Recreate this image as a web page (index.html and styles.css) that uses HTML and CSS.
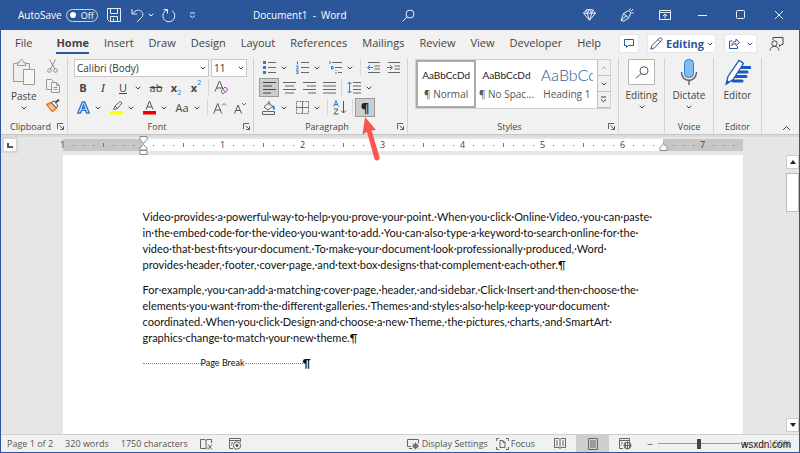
FILE: index.html
```html
<!DOCTYPE html>
<html lang="en">
<head>
    <meta charset="UTF-8">
    <meta name="viewport" content="width=device-width, initial-scale=1.0">
    <title>Document1 - Word</title>
    <link rel="stylesheet" href="styles.css">
</head>
<body>
    <svg class="sprite" aria-hidden="true">
        <symbol id="chev" viewBox="0 0 6 4"><path d="M.7.7 3 3 5.3.7" fill="none" stroke="currentColor"/></symbol>
        <symbol id="launch" viewBox="0 0 8 8"><path d="M.5 7V.5H7M3 3l4 4M7.5 3.5v4h-4" fill="none" stroke="currentColor"/></symbol>
    </svg>

    <div class="window">
        <!-- Title bar -->
        <header class="titlebar">
            <div class="quick-access">
                <span>AutoSave</span>
                <button class="toggle" aria-label="AutoSave off"><i></i>Off</button>
                <button class="save" aria-label="Save"><svg width="14" height="14" viewBox="0 0 14 14"><path d="M.5.5h13v13h-11l-2-2zM3.500.5v5h7v-5M3.500 13.500v-5h7v5M6.500 10.500v3"/></svg></button>
                <button class="undo" aria-label="Undo"><svg width="13" height="15" viewBox="0 0 13 15"><path d="M1 1v5h5M1.300 5.700C5 1.500 8.500 1.500 10.500 3.500c2 2 1.600 4.500 0 6L6 14"/></svg></button>
                <button class="more" aria-label="Undo list"><svg width="6" height="4"><use href="#chev"/></svg></button>
                <button class="redo" aria-label="Redo"><svg width="14" height="15" viewBox="0 0 14 15"><path d="M1.500 1.500h4v4M5.300 2A6 6 0 1 0 10 2.700"/></svg></button>
                <button class="custom" aria-label="Customize"><svg width="7" height="7" viewBox="0 0 7 7"><path d="M1 1h5M1 3.500l2.500 2.200L6 3.500"/></svg></button>
            </div>
            <div class="doc-title">Document1&nbsp; -&nbsp; Word</div>
            <button class="search" aria-label="Search"><svg width="13" height="13" viewBox="0 0 13 13"><circle cx="8" cy="5" r="4"/><path d="M5 8 .700 12.300"/></svg></button>
            <div class="window-buttons">
                <button aria-label="Premium"><svg width="13" height="12" viewBox="0 0 13 12"><path d="M3.500.7h6l3 3.500-6 7-6-7zM.5 4.200h12M3.500.700l.7 3.500 2.300 7 2.300-7 .700-3.500M4.200 4.200 6.500.7l2.300 3.500"/></svg></button>
                <button aria-label="Coming soon"><svg width="14" height="14" viewBox="0 0 14 14"><path d="M1 12.500 3.500 5.500 8.500 2.500l2.500 2.500-2.500 5-4.500 3zM1 12.500 6.500 7.500M3.500 5.500l5 4.500M10 2.500V.500M11 3.500l2-2.500M11.500 5h2"/></svg></button>
                <button aria-label="Ribbon display options"><svg width="12" height="10" viewBox="0 0 12 10"><path d="M.5.5h11v9H.500zM.500 2.500h11M6 8.500v-4M4 6l2-2 2 2"/></svg></button>
                <button aria-label="Minimize"><svg width="10" height="10" viewBox="0 0 10 10"><path d="M0 5.500h9"/></svg></button>
                <button aria-label="Maximize"><svg width="10" height="10" viewBox="0 0 10 10"><rect x=".5" y=".5" width="8" height="8" rx="1"/></svg></button>
                <button aria-label="Close"><svg width="10" height="10" viewBox="0 0 10 10"><path d="M1 1l8 8M9 1 1 9"/></svg></button>
            </div>
        </header>

        <!-- Tabs -->
        <nav class="tabs">
            <a href="#" class="file">File</a>
            <a href="#" class="active">Home</a>
            <a href="#">Insert</a>
            <a href="#">Draw</a>
            <a href="#">Design</a>
            <a href="#">Layout</a>
            <a href="#">References</a>
            <a href="#">Mailings</a>
            <a href="#">Review</a>
            <a href="#">View</a>
            <a href="#">Developer</a>
            <a href="#">Help</a>
            <div class="tab-actions">
                <button class="card" aria-label="Comments"><svg width="10" height="9" viewBox="0 0 10 9"><path d="M.5.500h9v6H4.500l-2 2v-2h-2z"/></svg></button>
                <button class="card editing"><svg width="13" height="13" viewBox="0 0 13 13"><path d="M.7 12.300 2 8.500l7.300-7.300a1.500 1.500 0 0 1 2.300 2.300L4.300 11zM8 2.500 10.500 5"/></svg><b>Editing</b><svg width="6" height="4"><use href="#chev"/></svg></button>
                <button class="card share" aria-label="Share"><svg width="11" height="11" viewBox="0 0 11 11"><path d="M3.500 3H.5v7.500h8V8M3 7.500c0-3 1.500-4 4-4V1l3.500 3.500L7 7.500V5.700c-2 0-3 .3-4 1.800z"/></svg><svg width="6" height="4"><use href="#chev"/></svg></button>
                <button class="person" aria-label="Account"><svg width="15" height="14" viewBox="0 0 15 14"><path d="M4 3V.5h10v7h-1.500l-2 2v-2M1 13.500C1.500 10 4 9.500 5.500 9.500s4 .5 4.500 4"/><circle cx="5.500" cy="6.500" r="2.700"/></svg></button>
            </div>
        </nav>

        <!-- Ribbon -->
        <section class="ribbon">
            <div class="group clipboard">
                <div class="group-body">
                    <button class="big">
                        <svg width="24" height="27" viewBox="0 0 24 27" fill="#eee" stroke="#999"><path d="M1.500 4.500h16v18h-16z"/><path d="M5.500 6.500v-3h2c.5-4 3.500-4 4 0h2v3z"/><path d="M11.500 10.500h11v15h-11z" fill="#f6f6f6"/></svg>
                        <span>Paste</span>
                        <svg width="6" height="4"><use href="#chev"/></svg>
                    </button>
                    <div class="side">
                        <button aria-label="Cut"><svg width="12" height="14" viewBox="0 0 12 14" fill="none" stroke="#8b8b8b"><path d="M2.500.500 8 10M8.500.5 3.500 10"/><circle cx="2.500" cy="11.500" r="1.800"/><circle cx="8.500" cy="11.500" r="1.800"/></svg></button>
                        <button aria-label="Copy"><svg width="14" height="14" viewBox="0 0 14 14" fill="#f3f3f3" stroke="#999"><path d="M.5.500h5l2 2v8h-7z"/><path d="M5.500 3.500h5l3 3v7h-8zM10.500 3.500v3h3M7.500 8.500h4M7.500 10.500h4"/></svg></button>
                        <button aria-label="Format painter"><svg width="14" height="13" viewBox="0 0 14 13"><path d="M.7 5.500 5.500 3.500l5 5.500-4 3.500z" fill="#ffb77a" stroke="#e07a1f" stroke-width="1.500"/><path d="M3 6.500l4 4" stroke="#fff"/><path d="M5.500 3.500 8 2l4 5-2 1.500z" fill="#fff" stroke="#555"/><path d="M9.500 3.500 13 .800" stroke="#444" stroke-width="2"/></svg></button>
                    </div>
                </div>
                <div class="group-label"><span>Clipboard</span><svg width="7" height="7"><use href="#launch"/></svg></div>
            </div>

            <div class="group font">
                <div class="group-body rows">
                    <div class="row selects">
                        <div class="pick name"><select aria-label="Font"><option>Calibri (Body)</option></select><svg width="6" height="4"><use href="#chev"/></svg></div>
                        <div class="pick size"><select aria-label="Font size"><option>11</option></select><svg width="6" height="4"><use href="#chev"/></svg></div>
                    </div>
                    <div class="row">
                        <button class="tool"><b>B</b></button>
                        <button class="tool serif"><i>I</i></button>
                        <button class="tool"><u>U</u></button>
                        <button class="drop" aria-label="Underline style"><svg width="6" height="4"><use href="#chev"/></svg></button>
                        <button class="tool"><s>ab</s></button>
                        <button class="tool"><b>x</b><sub>2</sub></button>
                        <button class="tool"><b>x</b><sup>2</sup></button>
                        <span class="bar"></span>
                        <button class="tool" aria-label="Clear formatting"><svg width="15" height="15" viewBox="0 0 15 15" fill="none" stroke="#555"><path d="M1 11.500 5.500 1l3.500 8M2.500 8H8"/><path d="M7 11l4-4 3 2.500-4 4H8.500z" stroke="#a04cab" fill="#f5e6f7"/><path d="M8.500 9.500l3 2.500" stroke="#a04cab"/></svg></button>
                    </div>
                    <div class="row">
                        <button class="tool" aria-label="Text effects"><svg width="13" height="13" viewBox="0 0 13 13" fill="#fff" stroke="#2b7cd3" stroke-width="1.500"><path d="M.8 12 5.300 1h2.400l4.500 11H9.500l-1-2.700h-4L3.500 12zM5.300 7.200h2.400L6.500 4z"/></svg></button>
                        <button class="drop" aria-label="Effects list"><svg width="6" height="4"><use href="#chev"/></svg></button>
                        <button class="tool" aria-label="Highlight"><svg width="13" height="14" viewBox="0 0 13 14" fill="none" stroke="#666"><path d="M0 10h13v3.500H0z" fill="#ffff00" stroke="none"/><path d="M3.500 8.500 5 5l5-4.500L12 2 7.500 7.500zM5 5l2.500 2.500"/></svg></button>
                        <button class="drop" aria-label="Highlight colour"><svg width="6" height="4"><use href="#chev"/></svg></button>
                        <button class="tool" aria-label="Font colour"><svg width="13" height="14" viewBox="0 0 13 14" fill="none" stroke="#555"><path d="M0 10h13v3.500H0z" fill="#f00000" stroke="none"/><path d="M3 8.500 6.500 0 10 8.500M4.200 6h4.600"/></svg></button>
                        <button class="drop" aria-label="Font colours"><svg width="6" height="4"><use href="#chev"/></svg></button>
                        <button class="tool">Aa</button>
                        <button class="drop" aria-label="Change case"><svg width="6" height="4"><use href="#chev"/></svg></button>
                        <span class="bar"></span>
                        <button class="tool" aria-label="Grow font"><svg width="14" height="12" viewBox="0 0 14 12" fill="none" stroke="#555"><path d="M.7 11.500 4.700 1.500l4 10M2 8h5.500"/><path d="M9 3.500l2-2 2 2" stroke="#2b7cd3"/></svg></button>
                        <button class="tool" aria-label="Shrink font"><svg width="14" height="12" viewBox="0 0 14 12" fill="none" stroke="#555"><path d="M1.500 11.500 5 3l3.500 8.500M2.700 8.500h4.600"/><path d="M9 1l2 2 2-2" stroke="#2b7cd3"/></svg></button>
                    </div>
                </div>
                <div class="group-label"><span>Font</span><svg width="7" height="7"><use href="#launch"/></svg></div>
            </div>

            <div class="group paragraph">
                <div class="group-body rows">
                    <div class="row">
                        <button class="tool" aria-label="Bullets"><svg width="13" height="13" viewBox="0 0 13 13" stroke="#666"><path d="M5 1.500h8M5 6.500h8M5 11.500h8"/><path d="M0 1.500h3M0 6.500h3M0 11.500h3" stroke="#2b7cd3" stroke-width="3"/></svg></button>
                        <button class="drop" aria-label="Bullet library"><svg width="6" height="4"><use href="#chev"/></svg></button>
                        <button class="tool" aria-label="Numbering"><svg width="13" height="13" viewBox="0 0 13 13" fill="none" stroke="#666"><path d="M5 1.500h8M5 6.500h8M5 11.500h8"/><path d="M.5 1h1v2.500M0 5.200h2v1.300L.500 8H2.500M0 9.700h2v3H0M1 11.200h1" stroke="#2b7cd3"/></svg></button>
                        <button class="drop" aria-label="Numbering library"><svg width="6" height="4"><use href="#chev"/></svg></button>
                        <button class="tool" aria-label="Multilevel list"><svg width="13" height="13" viewBox="0 0 13 13" fill="none" stroke="#666"><path d="M3 1.500h10M6 6.500h7M9 11.500h4"/><path d="M.5.500h.5V3M2.500 5.500h1.500v2.500H2.500zM7 9v1M7 11v2" stroke="#2b7cd3"/></svg></button>
                        <button class="drop" aria-label="List library"><svg width="6" height="4"><use href="#chev"/></svg></button>
                        <span class="bar"></span>
                        <button class="tool" aria-label="Decrease indent"><svg width="13" height="11" viewBox="0 0 13 11" fill="none" stroke="#666"><path d="M1 .500h12M7.500 4h5.500M7.500 7h5.500M1 10.500h12"/><path d="M6 5.500H.7M3 3 .700 5.500 3 8" stroke="#2b7cd3"/></svg></button>
                        <button class="tool" aria-label="Increase indent"><svg width="13" height="11" viewBox="0 0 13 11" fill="none" stroke="#666"><path d="M1 .500h12M7.500 4h5.500M7.500 7h5.500M1 10.500h12"/><path d="M0 5.500h5.300M3 3l2.300 2.500L3 8" stroke="#2b7cd3"/></svg></button>
                    </div>
                    <div class="row">
                        <button class="tool on" aria-label="Align left"><svg width="13" height="12" viewBox="0 0 13 12" stroke="#444"><path d="M0 .500h13M0 4h9M0 7.500h13M0 11h8"/></svg></button>
                        <button class="tool" aria-label="Center"><svg width="13" height="12" viewBox="0 0 13 12" stroke="#666"><path d="M0 .500h13M2 4h9M0 7.500h13M2 11h9"/></svg></button>
                        <button class="tool" aria-label="Align right"><svg width="13" height="12" viewBox="0 0 13 12" stroke="#666"><path d="M0 .500h13M4 4h9M0 7.500h13M5 11h8"/></svg></button>
                        <button class="tool" aria-label="Justify"><svg width="13" height="12" viewBox="0 0 13 12" stroke="#666"><path d="M0 .500h13M0 4h13M0 7.500h13M0 11h13"/></svg></button>
                        <span class="bar"></span>
                        <button class="tool" aria-label="Line spacing"><svg width="14" height="13" viewBox="0 0 14 13" fill="none" stroke="#666"><path d="M6 1.500h8M6 5h8M6 8.500h8M6 12h8"/><path d="M2.500 1v11M.500 3l2-2 2 2M.500 10l2 2 2-2" stroke="#2b7cd3"/></svg></button>
                        <button class="drop" aria-label="Spacing list"><svg width="6" height="4"><use href="#chev"/></svg></button>
                    </div>
                    <div class="row">
                        <button class="tool" aria-label="Shading"><svg width="14" height="14" viewBox="0 0 14 14" fill="none" stroke="#666"><path d="M.5 10.500h12v3H.500zM2 6l5-4.500 3.500 4L6 9zM7 1.500V0M7 1.500v3"/><path d="M10.500 5c1.500.5 1.500 2 1.500 3.500" stroke="#2b7cd3" stroke-width="2"/></svg></button>
                        <button class="drop" aria-label="Shading colours"><svg width="6" height="4"><use href="#chev"/></svg></button>
                        <button class="tool" aria-label="Borders"><svg width="13" height="13" viewBox="0 0 13 13" fill="none" stroke="#777"><path d="M.5.500h12v12H.500z" stroke-dasharray="2 1"/><path d="M6.500 0v13M0 6.500h13"/></svg></button>
                        <button class="drop" aria-label="Border list"><svg width="6" height="4"><use href="#chev"/></svg></button>
                        <span class="bar"></span>
                        <button class="tool" aria-label="Sort"><svg width="14" height="15" viewBox="0 0 14 15" fill="none" stroke="#555"><path d="M.7 6.500 3 .500l2.300 6M1.500 4.500h3" stroke="#2b7cd3"/><path d="M1 9h4l-4 5h4.500M10.500 1v12M8 10.500l2.500 2.500 2.500-2.500"/></svg></button>
                        <span class="bar"></span>
                        <button class="tool on pilcrow">¶
                            <svg class="pointer" width="22" height="46" viewBox="0 0 22 46"><path d="M5 0 16 13 11.500 13.500 19.500 40a2.700 2.700 0 0 1-5 2L7 15 2.500 17.500z" fill="#f9564f"/></svg>
                        </button>
                    </div>
                </div>
                <div class="group-label"><span>Paragraph</span><svg width="7" height="7"><use href="#launch"/></svg></div>
            </div>

            <div class="group styles">
                <div class="group-body">
                    <div class="gallery">
                        <button class="style selected"><span class="sample">AaBbCcDd</span><span>¶ Normal</span></button>
                        <button class="style"><span class="sample">AaBbCcDd</span><span>¶ No Spac...</span></button>
                        <button class="style"><span class="sample heading">AaBbCc</span><span>Heading 1</span></button>
                        <div class="gallery-nav">
                            <button aria-label="Previous styles" disabled><svg class="up" width="6" height="4"><use href="#chev"/></svg></button>
                            <button aria-label="Next styles"><svg width="6" height="4"><use href="#chev"/></svg></button>
                            <button aria-label="All styles"><svg width="7" height="7" viewBox="0 0 7 7" fill="none" stroke="#444"><path d="M1 1h5M1 3.500l2.500 2.200L6 3.500"/></svg></button>
                        </div>
                    </div>
                </div>
                <div class="group-label"><span>Styles</span><svg width="7" height="7"><use href="#launch"/></svg></div>
            </div>

            <div class="group edit">
                <button class="big">
                    <span class="framed"><svg width="14" height="13" viewBox="0 0 14 13" fill="none" stroke="#555"><circle cx="9" cy="4.700" r="4"/><path d="M6 7.700 1 12.300"/></svg></span>
                    <span>Editing</span>
                    <svg width="6" height="4"><use href="#chev"/></svg>
                </button>
            </div>

            <div class="group voice">
                <button class="big">
                    <svg width="18" height="26" viewBox="0 0 18 26" fill="none" stroke="#555"><rect x="4.500" y=".5" width="9" height="18" rx="4" fill="#83bdec" stroke="#2b7cd3"/><path d="M1.500 13c0 11 15 11 15 0M9 21v5" stroke-width="1.300"/></svg>
                    <span>Dictate</span>
                    <svg width="6" height="4"><use href="#chev"/></svg>
                </button>
                <div class="group-label"><span>Voice</span></div>
            </div>

            <div class="group editor">
                <button class="big">
                    <svg width="26" height="26" viewBox="0 0 26 26"><path d="M14 8.500h11M13 13h9M10 17.500h11M8 22h9" stroke="#185abd" stroke-width="3" stroke-linecap="round"/><path d="M1 25.300 3 17.500 14 1.500l4.500 3L8 20.500z" fill="#fff" stroke="#185abd" stroke-width="1.300"/><path d="M1 25.300 2 21l2.500 1.700z" fill="#185abd"/></svg>
                    <span>Editor</span>
                </button>
                <div class="group-label"><span>Editor</span></div>
            </div>
            <button class="collapse" aria-label="Collapse ribbon"><svg width="9" height="6" viewBox="0 0 9 6" fill="none" stroke="#444"><path d="M1 5l3.500-3.500L8 5"/></svg></button>
        </section>

        <!-- Document area -->
        <main class="workspace">
            <button class="tab-stop" aria-label="Tab stop"><svg width="6" height="5" viewBox="0 0 6 5"><path d="M1 0v4h5" fill="none" stroke="#555" stroke-width="2"/></svg></button>
            <div class="canvas">
                <div class="ruler">
                    <div class="numbers"><span>1</span><span></span><span>1</span><span>2</span><span>3</span><span>4</span><span>5</span><span>6</span><span>7</span></div>
                    <svg class="marker left" width="9" height="19" viewBox="0 0 9 19" fill="#fff" stroke="#888"><path d="M1 .500h7v3L4.500 7.500 1 3.500zM4.500 8.500 8 12v2H1v-2zM1 14.500h7v4H1z"/></svg>
                    <svg class="marker right" width="9" height="8" viewBox="0 0 9 8" fill="#fff" stroke="#888"><path d="M4.500.700 8 4.500v3H1v-3z"/></svg>
                </div>
                <article class="page">
                    <p>Video·provides·a·powerful·way·to·help·you·prove·your·point.·When·you·click·Online·Video,·you·can·paste·<br>in·the·embed·code·for·the·video·you·want·to·add.·You·can·also·type·a·keyword·to·search·online·for·the·<br>video·that·best·fits·your·document.·To·make·your·document·look·professionally·produced,·Word·<br>provides·header,·footer,·cover·page,·and·text·box·designs·that·complement·each·other.¶</p>
                    <p>For·example,·you·can·add·a·matching·cover·page,·header,·and·sidebar.·Click·Insert·and·then·choose·the·<br>elements·you·want·from·the·different·galleries.·Themes·and·styles·also·help·keep·your·document·<br>coordinated.·When·you·click·Design·and·choose·a·new·Theme,·the·pictures,·charts,·and·SmartArt·<br>graphics·change·to·match·your·new·theme.¶</p>
                    <div class="page-break"><i></i><span>Page Break</span><i></i><b>¶</b></div>
                </article>
            </div>
            <div class="scrollbar">
                <button aria-label="Scroll up"><svg width="6" height="4" viewBox="0 0 6 4"><path d="M0 4l3-4 3 4z" fill="#222"/></svg></button>
                <div class="thumb"></div>
                <button class="down" aria-label="Scroll down"><svg width="6" height="4" viewBox="0 0 6 4"><path d="M0 0l3 4 3-4z" fill="#222"/></svg></button>
            </div>
        </main>

        <!-- Status bar -->
        <footer class="status">
            <div class="counts">
                <span>Page 1 of 2</span>
                <span>320 words</span>
                <span>1750 characters</span>
                <svg width="13" height="12" viewBox="0 0 13 12"><path d="M6 1.500v9.500M6 10.500H.5v-9H5l1 1 1-1h4.500V5M7 10.500l1-1M8 6.500l4 5M12 6.500l-4 5"/></svg>
                <svg width="13" height="12" viewBox="0 0 13 12"><path d="M4 10.500H.5v-10h11V4M.500 2.500h11M2 5h2M2 7h1"/><circle cx="8" cy="7.500" r="3.700"/><circle cx="8" cy="7.500" r="1.200" fill="#555"/></svg>
            </div>
            <div class="views">
                <button class="display"><svg width="13" height="12" viewBox="0 0 13 12"><path d="M4 8.500H.5v-7h11V5M2 10.500h3"/><circle cx="8.500" cy="8" r="2"/><path d="M8.500 4.500v7M5 8h7M6 5.500l5 5M11 5.500l-5 5"/></svg>Display Settings</button>
                <button class="focus"><svg width="13" height="12" viewBox="0 0 13 12"><path d="M.5 3V.500H3M10 .500h2.500V3M.5 9v2.500H3M10 11.500h2.500V9M4 2.500h3l2 2v5H4zM7 2.500v2h2"/></svg>Focus</button>
                <button class="view" aria-label="Read mode"><svg width="12" height="11" viewBox="0 0 12 11"><path d="M6 1.500v9M6 1.500 5 .500H.5v9H5l1 1 1-1h4.500v-9H7zM2 3h2M2 5h2M2 7h2M8 3h2M8 5h2M8 7h2"/></svg></button>
                <button class="view current" aria-label="Print layout"><svg width="10" height="12" viewBox="0 0 10 12"><path d="M.5.500h9v11h-9zM2 3h6M2 5h6M2 7h6M2 9h6"/></svg></button>
                <button class="view" aria-label="Web layout"><svg width="13" height="12" viewBox="0 0 13 12"><path d="M4 10.500H.5v-10h10V4M.500 2.500h10M2 5h2M2 7h1"/><circle cx="8.500" cy="7.500" r="3.500"/><path d="M5 7.500h7M8.500 4v7M7 4.500c-1 2-1 4 0 6M10 4.500c1 2 1 4 0 6"/></svg></button>
                <button class="step minus" aria-label="Zoom out">−</button>
                <input type="range" aria-label="Zoom" min="0" max="100" value="50">
                <button class="step" aria-label="Zoom in">+</button>
                <span class="percent">100%<span class="site">wsxdn.com</span></span>
            </div>
        </footer>
    </div>
</body>
</html>
```
FILE: styles.css
```css
* {
    margin: 0;
    padding: 0;
    box-sizing: border-box;
}

body {
    font-family: 'Open Sans', 'Noto Sans', sans-serif;
    font-size: 10px;
    color: #444;
}

button {
    font: inherit;
    color: inherit;
    background: none;
    border: none;
    display: flex;
    align-items: center;
    justify-content: center;
}

svg {
    flex: none;
    display: block;
}

.sprite {
    position: absolute;
    width: 0;
    height: 0;
}

.window {
    min-height: 100vh;
    display: flex;
    flex-direction: column;
    border: 1px solid #2b579a;
    border-top: none;
    background: #f1f1f1;
}

/* Title bar */
.titlebar {
    height: 30px;
    display: flex;
    align-items: center;
    background: #2b579a;
    color: #fff;
    padding: 0 8px 0 17px;
}

.titlebar svg {
    fill: none;
    stroke: #e8eef8;
}

.quick-access {
    display: flex;
    align-items: center;
    width: 235px;
}

.toggle {
    width: 32px;
    height: 13px;
    margin-left: 4px;
    border: 1px solid #c7d4ea;
    border-radius: 7px;
    font-size: 9px;
    gap: 5px;
}

.toggle i {
    width: 6px;
    height: 6px;
    border-radius: 50%;
    background: #fff;
}

.save {
    margin-left: 9px;
}

.undo {
    margin-left: 10px;
}

.more {
    margin-left: 4px;
}

.redo {
    margin-left: 8px;
}

.custom {
    margin-left: 13px;
}

.search {
    margin-left: 55px;
}

.window-buttons {
    display: flex;
    margin-left: auto;
}

.window-buttons button {
    width: 38px;
    height: 30px;
}

.window-buttons button:last-child {
    width: 24px;
    margin-left: 7px;
}

/* Tabs */
.tabs {
    height: 27px;
    display: flex;
    align-items: center;
    gap: 15px;
    padding: 0 12px 0 14px;
    font-size: 11px;
}

.tabs a {
    color: #444;
    text-decoration: none;
    line-height: 18px;
    border-bottom: 2px solid transparent;
}

.tabs .file {
    margin-right: 9px;
}

.tabs .active {
    font-weight: bold;
    border-color: #2b579a;
}

.tab-actions {
    display: flex;
    align-items: center;
    gap: 8px;
    margin-left: auto;
    margin-right: 3px;
    color: #2b579a;
}

.tab-actions svg {
    fill: none;
    stroke: #2b579a;
}

.card {
    height: 19px;
    width: 20px;
    background: #fff;
    border: 1px solid #e6e6e6;
    border-radius: 2px;
}

.card.editing {
    width: 69px;
    gap: 3px;
}

.card.share {
    width: 33px;
    gap: 7px;
}

.tab-actions .person {
    margin-left: 4px;
}

.tab-actions .person svg {
    stroke: #444;
}

/* Ribbon */
.ribbon {
    height: 78px;
    display: flex;
    padding: 1px 0;
    border-bottom: 1px solid #c6c6c6;
}

.group {
    display: flex;
    flex-direction: column;
    border-right: 1px solid #d2d2d2;
}

.clipboard {
    width: 67px;
}

.font {
    width: 186px;
}

.paragraph {
    width: 154px;
}

.styles {
    width: 211px;
}

.edit {
    width: 46px;
}

.voice {
    width: 49px;
}

.editor {
    width: 48px;
}

.group-body {
    flex: 1;
    display: flex;
    padding-left: 5px;
}

.group-body.rows {
    flex-direction: column;
    gap: 1px;
}

.group-label {
    height: 13px;
    display: flex;
    align-items: center;
    padding: 0 3px;
    font-size: 9px;
    line-height: 12px;
    margin-top: auto;
}

.group-label span {
    flex: 1;
    text-align: center;
}

.big {
    flex-direction: column;
    justify-content: flex-start;
    gap: 3px;
    line-height: 14px;
    padding-top: 1px;
}

.clipboard .group-body {
    padding-left: 10px;
    gap: 3px;
}

.side {
    width: 28px;
    display: flex;
    flex-direction: column;
    gap: 6px;
    align-items: center;
    padding-top: 1px;
}

.row {
    height: 19px;
    display: flex;
    align-items: center;
}

.selects {
    gap: 2px;
    padding-left: 1px;
}

.pick {
    display: grid;
    align-items: center;
    height: 18px;
}

.pick select,
.pick svg {
    grid-area: 1 / 1;
}

.pick svg {
    justify-self: end;
    margin-right: 3px;
    pointer-events: none;
}

.pick select {
    appearance: none;
    width: 100%;
    height: 18px;
    padding-left: 2px;
    font: inherit;
    color: #333;
    background: #fff;
    border: 1px solid #c8c8c8;
    border-radius: 0;
}

.pick.name {
    width: 135px;
}

.pick.size {
    width: 36px;
}

.tool {
    width: 20px;
    height: 19px;
    font-size: 11px;
    position: relative;
}

.tool.serif {
    font-family: 'Liberation Serif', serif;
    font-size: 13px;
}

.tool sub,
.tool sup {
    font-size: 7px;
    color: #2b7cd3;
}

.tool sub {
    align-self: flex-end;
}

.tool sup {
    align-self: flex-start;
}

.tool.on {
    background: #cdcdcd;
    border: 1px solid #999;
}

.drop {
    width: 10px;
    height: 19px;
    margin-right: 3px;
}

.bar {
    width: 1px;
    height: 17px;
    margin: 0 2px;
    background: #d8d8d8;
}

.tool.pilcrow {
    font-size: 13px;
    font-weight: bold;
    color: #222;
}

.pointer {
    position: absolute;
    left: 4px;
    top: 18px;
    z-index: 2;
}

.styles .group-body {
    padding: 1px 7px 0;
}

.gallery {
    flex: 1;
    height: 50px;
    display: flex;
    background: #fff;
    border: 1px solid #d0d0d0;
}

.style {
    flex: 1;
    min-width: 0;
    overflow: hidden;
    flex-direction: column;
    border: 2px solid transparent;
    color: #555;
    white-space: nowrap;
    line-height: 18px;
}

.style.selected {
    border-color: #ababab;
}

.sample {
    font-family: Lato, sans-serif;
    font-size: 10px;
    color: #222;
    height: 19px;
}

.sample.heading {
    font-size: 16px;
    font-weight: 300;
    color: #2f5496;
    max-width: 52px;
    overflow: hidden;
}

.gallery-nav {
    width: 13px;
    display: flex;
    flex-direction: column;
    background: #f1f1f1;
}

.gallery-nav button {
    flex: 1;
    border: 1px solid #c0c0c0;
    border-width: 0 0 1px 1px;
}

.gallery-nav button:disabled {
    color: #aaa;
}

.up {
    transform: rotate(180deg);
}

.framed {
    width: 27px;
    height: 26px;
    display: flex;
    align-items: center;
    justify-content: center;
    background: #fff;
    border: 1px solid #b5b5b5;
}

.collapse {
    margin: auto 8px 2px auto;
}

/* Document area */
.workspace {
    flex: 1;
    display: flex;
    background: #e6e6e6;
    border-top: 2px solid #dadada;
}

.tab-stop {
    width: 16px;
    height: 16px;
    margin-left: 1px;
    background: #fff;
    border: 2px solid #d6d6d6;
}

.canvas {
    flex: 1;
    padding-left: 1px;
    display: flex;
    flex-direction: column;
    align-items: center;
}

.ruler {
    width: 680px;
    height: 12px;
    margin: 2px 0 4px;
    position: relative;
    background: linear-gradient(to right, #c6c6c6 80px, #fff 80px 600px, #c6c6c6 600px);
}

.numbers {
    height: 12px;
    display: flex;
    margin-left: -40px;
    font-size: 9px;
    line-height: 12px;
    text-align: center;
    background:
        linear-gradient(to right, transparent 10px, #777 10px 11px, transparent 11px 20px, #777 20px 21px, transparent 21px 30px, #777 30px 31px, transparent 31px 50px, #777 50px 51px, transparent 51px 60px, #777 60px 61px, transparent 61px 70px, #777 70px 71px, transparent 71px) 40px 6px / 80px 1px repeat-x,
        linear-gradient(to right, transparent 40px, #777 40px 41px, transparent 41px) 40px 4px / 80px 4px repeat-x;
    clip-path: inset(0 0 0 34px);
}

.numbers span {
    width: 80px;
    flex: none;
}

.marker {
    position: absolute;
}

.marker.left {
    left: 76px;
    top: -3px;
}

.marker.right {
    left: 596px;
    top: 4px;
}

.page {
    flex: 1;
    width: 680px;
    padding: 54px 40px 0 80px;
    background: #fff;
    font-family: Lato, sans-serif;
    font-size: 11px;
    line-height: 16px;
    color: #111;
    white-space: nowrap;
}

.page p {
    margin-bottom: 9px;
}

.page-break {
    display: flex;
    align-items: center;
    font-size: 9px;
}

.page-break i {
    width: 58px;
    border-top: 1px dotted #888;
}

.page-break b {
    font-size: 11px;
}

.scrollbar {
    width: 13px;
    display: flex;
    flex-direction: column;
    padding: 18px 0 2px;
}

.scrollbar button {
    height: 14px;
    background: #fff;
    border: 1px solid #ccc;
}

.thumb {
    height: 39px;
    margin-top: 4px;
    background: #fff;
    border: 1px solid #bbb;
}

.scrollbar .down {
    margin-top: auto;
}

/* Status bar */
.status {
    height: 18px;
    display: flex;
    align-items: center;
    justify-content: space-between;
    padding: 0 8px 0 6px;
    border-top: 1px solid #d0d0d0;
    font-size: 9px;
    color: #555;
}

.status svg {
    fill: none;
    stroke: #666;
}

.counts,
.views {
    display: flex;
    align-items: center;
    gap: 12px;
}

.counts svg {
    margin-right: 4px;
}

.views {
    gap: 0;
}

.views button {
    height: 17px;
    gap: 2px;
}

.views .focus {
    margin: 0 8px;
}

.views .view {
    width: 33px;
}

.views .current {
    background: #cfcfcf;
}

.views .step {
    width: 11px;
    font-size: 11px;
}

.views .minus {
    width: 16px;
}

.views input {
    appearance: none;
    width: 82px;
    height: 11px;
    background: linear-gradient(#999, #999) center / 100% 1px no-repeat;
}

.views input::-webkit-slider-thumb {
    appearance: none;
    width: 4px;
    height: 10px;
    background: #444;
}

.percent {
    position: relative;
    width: 40px;
    text-align: right;
    color: #888;
}

.site {
    position: absolute;
    right: 0;
    top: 2px;
    font-family: 'Liberation Sans', sans-serif;
    font-size: 10px;
    color: #111;
}
```
